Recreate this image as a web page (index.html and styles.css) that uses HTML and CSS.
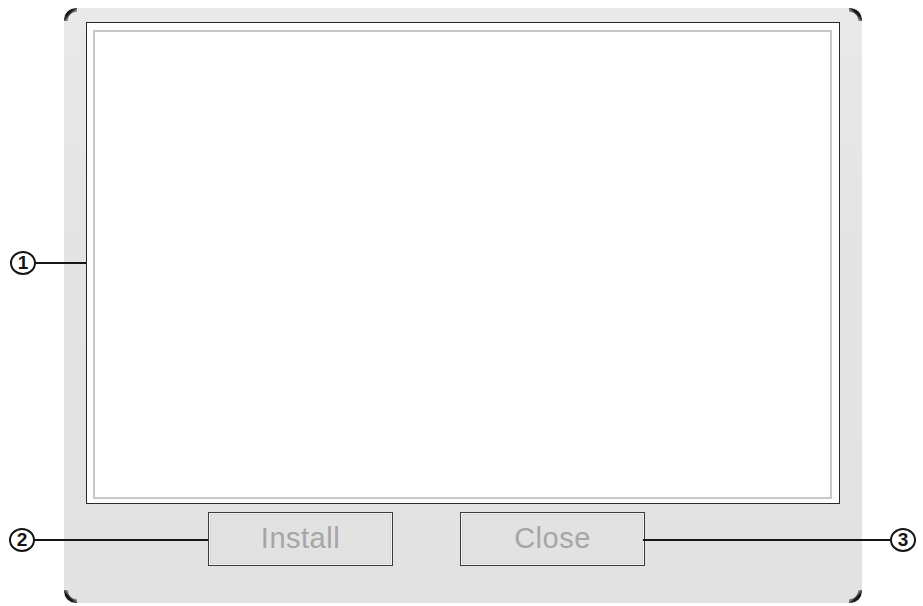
FILE: index.html
```html
<!DOCTYPE html>
<html lang="en">
<head>
  <meta charset="UTF-8">
  <meta name="viewport" content="width=device-width, initial-scale=1.0">
  <title>Install Dialog</title>
  <link rel="stylesheet" href="styles.css">
</head>

<body>
  <div class="page">
    <div class="dialog">
      <span class="corner corner-tl"></span>
      <span class="corner corner-tr"></span>
      <span class="corner corner-bl"></span>
      <span class="corner corner-br"></span>

      <div class="frame">
        <div class="frame-inner"></div>
      </div>

      <div class="button-row">
        <button class="dialog-button" disabled>Install</button>
        <button class="dialog-button">Close</button>
      </div>
    </div>

    <!-- leader lines for the numbered parts -->
    <div class="callout callout-1">
      <span class="callout-num">1</span>
      <span class="callout-line"></span>
    </div>
    <div class="callout callout-2">
      <span class="callout-num">2</span>
      <span class="callout-line"></span>
    </div>
    <div class="callout callout-3">
      <span class="callout-line"></span>
      <span class="callout-num">3</span>
    </div>
  </div>
</body>

</html>
```

FILE: styles.css
```css
:root {
  --panel: #e4e4e4;
  --ink: #151515;
  --frame-line: #2a2a2a;
  --inner-line: #c8c8c8;
  --button-fill: #e2e2e2;
  --button-text: #a6a6a6;
}

* {
  margin: 0;
  padding: 0;
  box-sizing: border-box;
}

body {
  background: #ffffff;
  font-family: "Liberation Sans", Arial, sans-serif;
}

.page {
  position: relative;
  width: 923px;
  height: 606px;
  padding: 8px 0 0 64px;
}

.dialog {
  position: relative;
  width: 798px;
  height: 595px;
  padding: 14px 22px 0 22px;
  background: linear-gradient(180deg, #e9e9e9 0%, var(--panel) 40%, #e2e2e2 100%);
  border-radius: 9px;
  display: flex;
  flex-direction: column;
}

/* dark shading on the rounded bezel corners */
.corner {
  position: absolute;
  width: 13px;
  height: 13px;
  border: 0 solid #161616;
}

.corner-tl {
  top: 0;
  left: 0;
  border-top-width: 4px;
  border-left-width: 4px;
  border-top-left-radius: 12px;
  -webkit-mask-image: linear-gradient(135deg, #000 40%, transparent 72%);
  mask-image: linear-gradient(135deg, #000 40%, transparent 72%);
}

.corner-tr {
  top: 0;
  right: 0;
  border-top-width: 4px;
  border-right-width: 4px;
  border-top-right-radius: 12px;
  -webkit-mask-image: linear-gradient(225deg, #000 40%, transparent 72%);
  mask-image: linear-gradient(225deg, #000 40%, transparent 72%);
}

.corner-bl {
  bottom: 0;
  left: 0;
  border-bottom-width: 4px;
  border-left-width: 4px;
  border-bottom-left-radius: 12px;
  -webkit-mask-image: linear-gradient(45deg, #000 40%, transparent 72%);
  mask-image: linear-gradient(45deg, #000 40%, transparent 72%);
}

.corner-br {
  bottom: 0;
  right: 0;
  border-bottom-width: 4px;
  border-right-width: 4px;
  border-bottom-right-radius: 12px;
  -webkit-mask-image: linear-gradient(315deg, #000 40%, transparent 72%);
  mask-image: linear-gradient(315deg, #000 40%, transparent 72%);
}

.frame {
  height: 482px;
  background: #ffffff;
  border: 1px solid var(--frame-line);
  padding: 7px 7px 4px 6px;
}

.frame-inner {
  height: 100%;
  border: 2px solid var(--inner-line);
  background: #ffffff;
}

.button-row {
  display: flex;
  gap: 67px;
  margin-top: 8px;
  padding-left: 122px;
}

.dialog-button {
  width: 185px;
  height: 54px;
  background: var(--button-fill);
  border: 1px solid #3a3a3a;
  box-shadow: inset 0 0 0 1px #f4f4f4, inset 0 0 0 2px #d6d6d6;
  color: var(--button-text);
  font-family: "Liberation Sans", Arial, sans-serif;
  font-size: 29px;
  letter-spacing: 0.5px;
  line-height: 1;
  padding-bottom: 2px;
  cursor: default;
}

.callout {
  position: absolute;
  display: flex;
  align-items: center;
}

.callout-num {
  width: 26px;
  height: 24px;
  border: 2px solid var(--ink);
  border-radius: 50%;
  display: flex;
  align-items: center;
  justify-content: center;
  font-size: 19px;
  font-weight: 700;
  color: var(--ink);
  flex-shrink: 0;
}

.callout-line {
  height: 2px;
  background: var(--ink);
}

.callout-1 {
  left: 10px;
  top: 251px;
}

.callout-1 .callout-line {
  width: 50px;
}

.callout-2 {
  left: 9px;
  top: 528px;
}

.callout-2 .callout-line {
  width: 173px;
}

.callout-3 {
  left: 643px;
  top: 528px;
}

.callout-3 .callout-line {
  width: 247px;
}
```
